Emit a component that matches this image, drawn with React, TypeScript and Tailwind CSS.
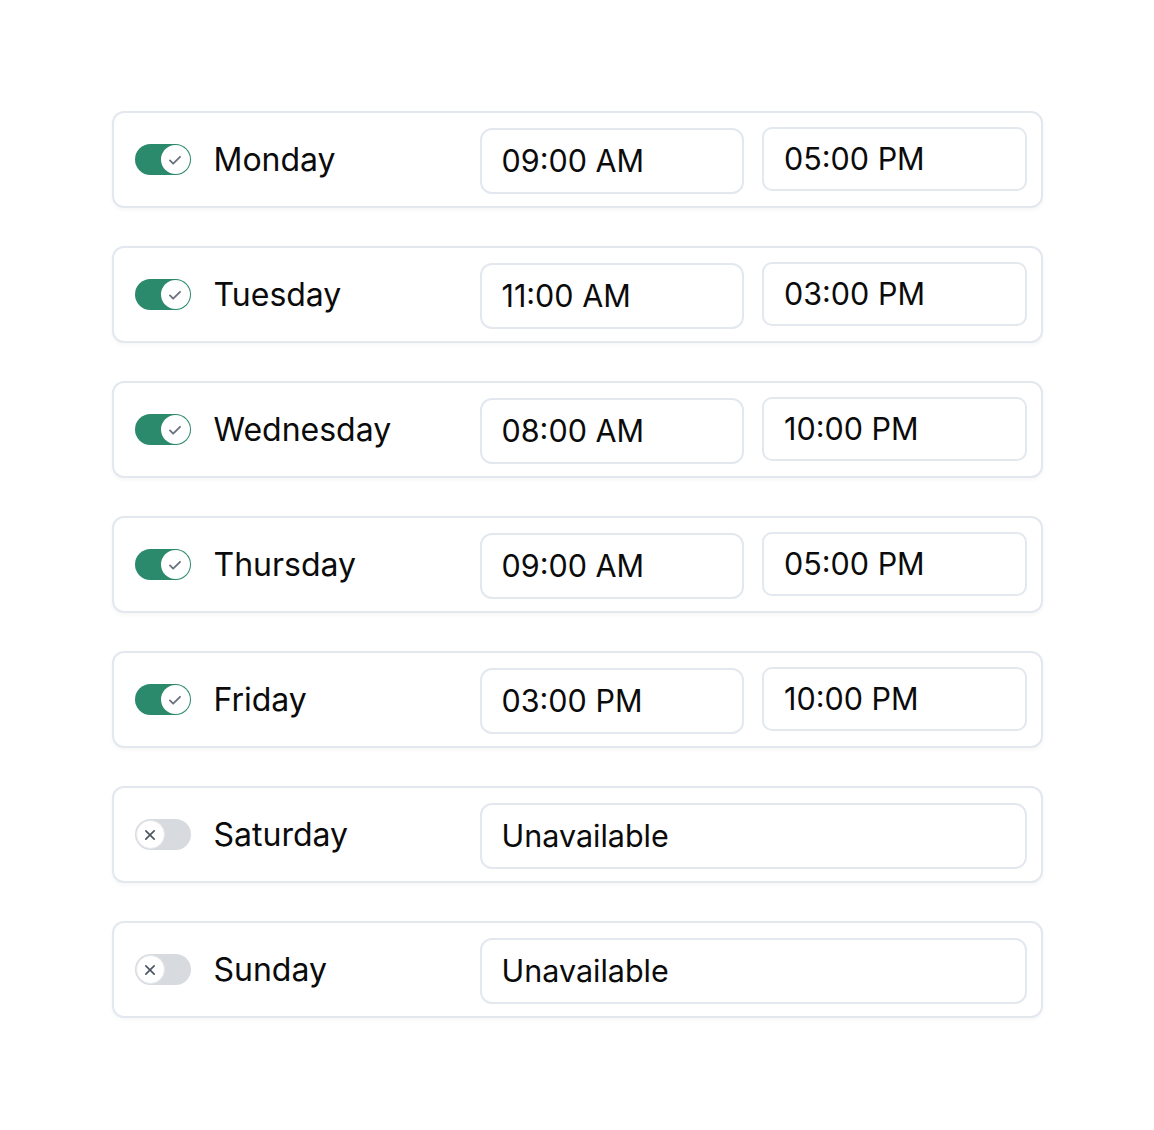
const days = [
  { name: "Monday", on: true, from: "09:00 AM", to: "05:00 PM" },
  { name: "Tuesday", on: true, from: "11:00 AM", to: "03:00 PM" },
  { name: "Wednesday", on: true, from: "08:00 AM", to: "10:00 PM" },
  { name: "Thursday", on: true, from: "09:00 AM", to: "05:00 PM" },
  { name: "Friday", on: true, from: "03:00 PM", to: "10:00 PM" },
  { name: "Saturday", on: false },
  { name: "Sunday", on: false },
];

function Toggle({ on }: { on: boolean }) {
  if (on) {
    return (
      <div className="flex h-[31px] w-[56px] shrink-0 items-center justify-end rounded-full bg-[#2a8a6b] p-[1px]">
        <div className="flex h-[29px] w-[29px] items-center justify-center rounded-full bg-white">
          <svg width="22" height="22" viewBox="0 0 24 24" fill="none" stroke="#6b7280" strokeWidth="2" strokeLinecap="round" strokeLinejoin="round">
            <path d="M6.5 12.5l3.5 3.5L17.5 8.5" />
          </svg>
        </div>
      </div>
    );
  }
  return (
    <div className="flex h-[31px] w-[56px] shrink-0 items-center justify-start rounded-full bg-[#d7dadf] p-[1px]">
      <div className="flex h-[29px] w-[29px] items-center justify-center rounded-full border border-[#e5e7eb] bg-white">
        <svg width="20" height="20" viewBox="0 0 24 24" fill="none" stroke="#4b5563" strokeWidth="2" strokeLinecap="round">
          <path d="M7 7l10 10M17 7L7 17" />
        </svg>
      </div>
    </div>
  );
}

export default function App() {
  return (
    <div
      className="min-h-[1130px] w-full bg-white pt-[111px]"
      style={{ fontFamily: "Inter, 'Liberation Sans', sans-serif" }}
    >
      <div className="mx-auto flex w-[931px] flex-col gap-[38px]">
        {days.map((d) => (
          <div
            key={d.name}
            className="flex h-[97px] items-center rounded-[12px] border-2 border-[#e3e8ef] bg-white pl-[21px] pr-[14px] shadow-[0_2px_4px_rgba(15,23,42,0.04)]"
          >
            <Toggle on={d.on} />
            <span className="ml-[23px] w-[266px] shrink-0 text-[32px] leading-none text-[#0b0b0b]">
              {d.name}
            </span>
            {d.on ? (
              <div className="flex flex-1 items-center gap-[18px]">
                <div className="mt-[2px] flex h-[66px] flex-1 items-center rounded-[12px] border-2 border-[#e3e8ef] px-[20px] text-[30.5px] text-[#0b0b0b]">
                  {d.from}
                </div>
                <div className="-mt-[1px] flex h-[64px] flex-1 items-center rounded-[10px] border-2 border-[#e3e8ef] px-[20px] text-[30.5px] text-[#0b0b0b]">
                  {d.to}
                </div>
              </div>
            ) : (
              <div className="mt-[2px] flex h-[66px] flex-1 items-center rounded-[12px] border-2 border-[#e3e8ef] px-[20px] text-[30.5px] text-[#0b0b0b]">
                Unavailable
              </div>
            )}
          </div>
        ))}
      </div>
    </div>
  );
}
